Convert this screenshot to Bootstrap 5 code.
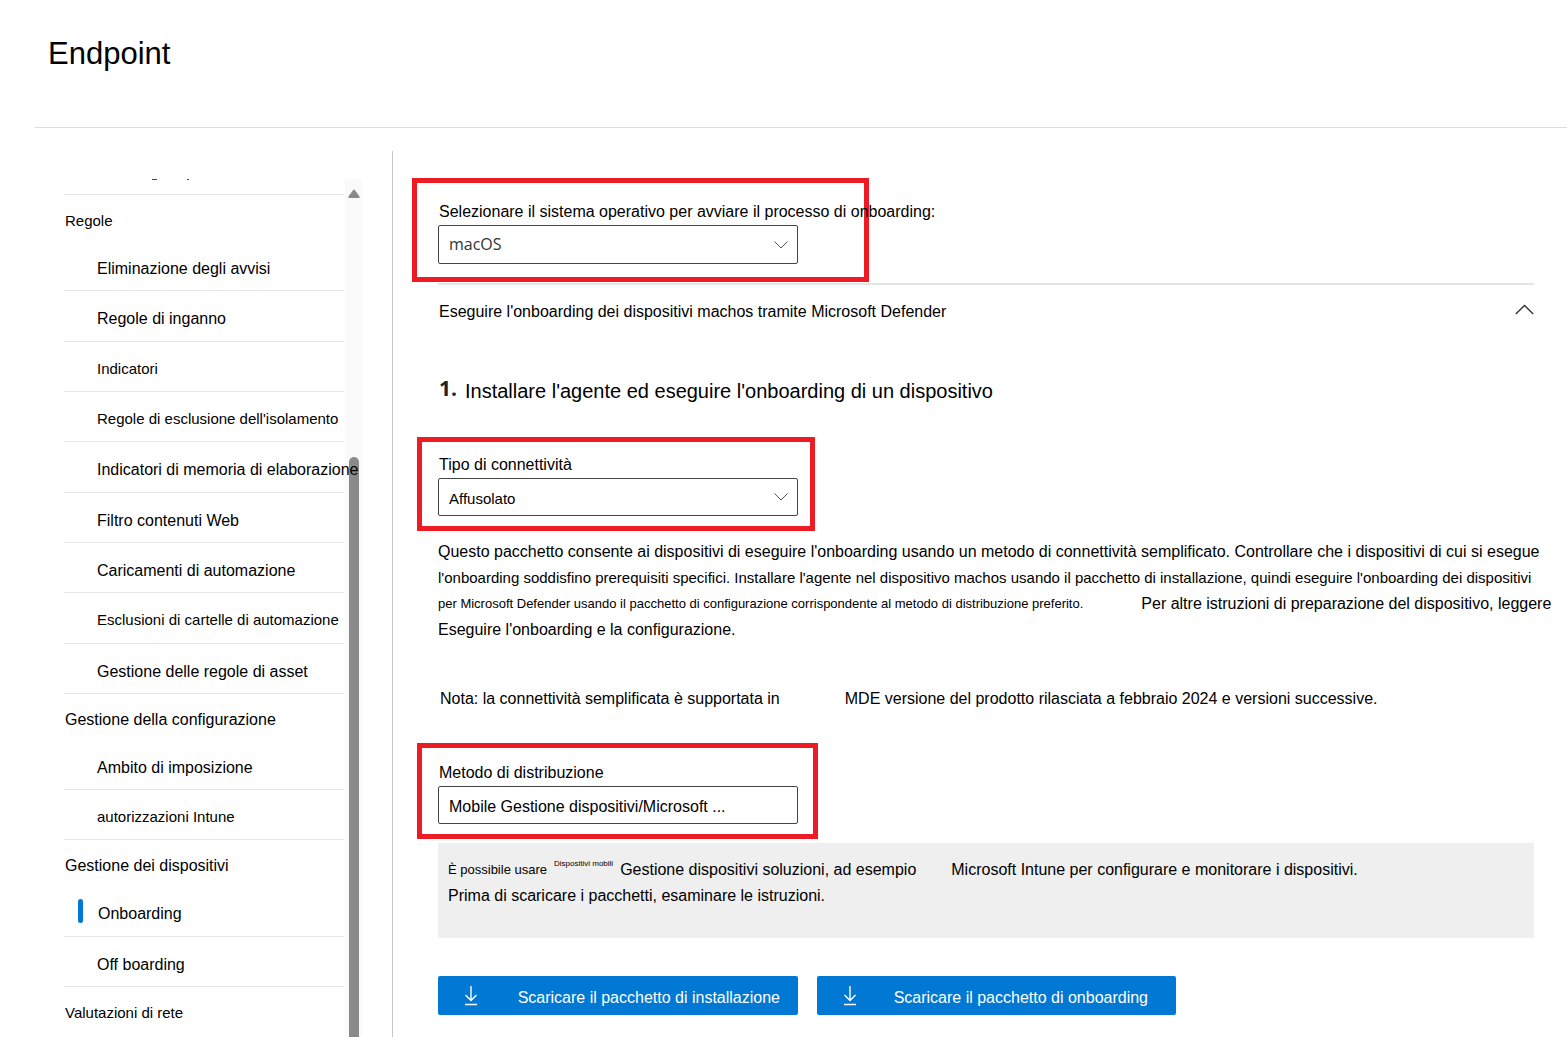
<!DOCTYPE html>
<html lang="it">
<head>
<meta charset="utf-8">
<meta name="viewport" content="width=device-width, initial-scale=1">
<title>Endpoint</title>
<link href="https://cdn.jsdelivr.net/npm/bootstrap@5.3.0/dist/css/bootstrap.min.css" rel="stylesheet">
<style>
  body { font-family: "Liberation Sans", Arial, sans-serif; font-size: 16px; line-height: 24px; color: #000; background: #fff; }
  a { color: inherit; text-decoration: none; }
  .shell { min-height: 100vh; }
  .page-head { margin-left: 35px; padding: 35px 13px 54px; border-bottom: 1px solid #dcdcdc; }
  .page-head h1 { font-size: 31px; line-height: 38px; font-weight: 400; }

  .side { width: 393px; flex: none; margin-top: 23px; padding: 28px 30px 0 64px; border-right: 1px solid #c8c8c8; }
  .side-nav { width: 281px; z-index: 1; }
  .side-nav ul { width: 280px; }
  .cut-row { height: 16px; border-bottom: 1px solid #e6e6e6; }
  .cut-row svg { display: block; margin-left: 87px; }
  .nav-group { height: 46px; padding: 6px 0 0 1px; }
  .nav-leaf { height: 50px; padding: 6px 0 0 33px; border-bottom: 1px solid #e6e6e6; white-space: nowrap; }
  .nav-leaf.txt-15 { padding-top: 4px; }
  .nav-leaf.tall { height: 51px; }
  .txt-15 { font-size: 15px; }
  .txt-13 { font-size: 13px; }
  .txt-8 { font-size: 8px; line-height: 14px; }
  .nav-leaf.current { padding-left: 14px; }
  .current-bar { width: 5px; height: 24px; margin: -7px 15px 0 0; border-radius: 3px; background: #0078d4; }

  .bar-track { width: 17px; background: #fafafa; padding-top: 10px; }
  .bar-thumb { width: 10px; margin-top: 258px; border-radius: 5px 5px 0 0; background: #8a8a8a; }

  .work { padding: 50px 0 20px 45px; min-width: 0; }
  .inset-end { margin-right: 33px; }
  .hilite { border: 5px solid #ed1c24; padding: 11px 12px 10px 16px; margin: 33px 0 0 -21px; width: 398px; }
  .hilite-os { padding: 17px 66px 13px 21px; margin: 0 0 0 -26px; width: 457px; }
  .hilite-method { padding-top: 13px; padding-right: 15px; width: 401px; }
  .hilite label { display: block; margin: 0 0 1px 1px; white-space: nowrap; }
  .pick.form-select { width: 360px; height: 38px; padding: 4px 30px 0 10px; border: 1px solid #444; border-radius: 2px; color: #000; line-height: 24px;
    background-position: right 9px center; background-size: 14px 8px;
    background-image: url("data:image/svg+xml,%3Csvg xmlns='http://www.w3.org/2000/svg' viewBox='0 0 14 8'%3E%3Cpath d='M.5.5 7 7 13.5.5' fill='none' stroke='%23555'/%3E%3C/svg%3E"); }
  .pick-os.form-select { height: 39px; padding-top: 0; padding-bottom: 2px; font-family: "Open Sans", "Noto Sans", sans-serif; font-size: 16px; color: #333; }
  .pick-plain.form-select { background-image: none; }

  .fold { margin-top: 1px; border-top: 2px solid #e4e4e4; padding-top: 15px; }
  .fold button { background: none; border: 0; padding: 0 0 0 1px; color: inherit; }
  .fold svg { margin-top: -4px; }
  .step { margin-top: 54px; gap: 8px; padding-left: 1px; }
  .step-no { font-family: "Open Sans", "Noto Sans", sans-serif; font-weight: 700; font-size: 21px; line-height: 20px; color: #222; }
  .step h2 { font-size: 20px; line-height: 26px; font-weight: 400; margin: 0; }
  .copy { line-height: 26px; margin-top: 8px; }
  .copy > div { white-space: nowrap; }
  .gap-link { gap: 58px; }
  .remark { margin-top: 44px; padding-left: 2px; gap: 65px; line-height: 24px; }
  .remark + .hilite { margin-top: 32px; }
  .tip { margin-top: 4px; padding: 14px 10px 29px; background: #efefef; line-height: 26px; }
  .tip-line { gap: 7px; }
  .tip-product { margin-left: 28px; }
  .actions { margin-top: 38px; gap: 19px; }
  .load.btn { --bs-btn-color: #fff; --bs-btn-bg: #0078d4; --bs-btn-hover-bg: #106ebe; --bs-btn-hover-color: #fff; width: 360px; height: 39px; border: 0; border-radius: 2px; padding: 4px 18px 0 26px; font-size: 16px; }
  .load.btn svg { margin-top: -4px; }
  .load-pkg.btn { width: 359px; padding-right: 28px; }
</style>
</head>
<body>
<div class="shell d-flex flex-column">
  <header class="page-head"><h1 class="m-0">Endpoint</h1></header>
  <div class="d-flex flex-grow-1">
    <aside class="side d-flex">
      <nav class="side-nav position-relative" aria-label="Impostazioni">
        <ul class="list-unstyled m-0">
          <li class="cut-row"><svg width="40" height="1" aria-hidden="true"><path d="M1 .5h5M36 .5h2" stroke="#444"/></svg></li>
          <li class="nav-group txt-15 d-flex align-items-center">Regole</li>
          <li class="nav-leaf d-flex align-items-center"><a href="#">Eliminazione degli avvisi</a></li>
          <li class="nav-leaf tall d-flex align-items-center"><a href="#">Regole di inganno</a></li>
          <li class="nav-leaf txt-15 d-flex align-items-center"><a href="#">Indicatori</a></li>
          <li class="nav-leaf txt-15 d-flex align-items-center"><a href="#">Regole di esclusione dell'isolamento</a></li>
          <li class="nav-leaf tall d-flex align-items-center"><a href="#">Indicatori di memoria di elaborazione</a></li>
          <li class="nav-leaf d-flex align-items-center"><a href="#">Filtro contenuti Web</a></li>
          <li class="nav-leaf d-flex align-items-center"><a href="#">Caricamenti di automazione</a></li>
          <li class="nav-leaf tall txt-15 d-flex align-items-center"><a href="#">Esclusioni di cartelle di automazione</a></li>
          <li class="nav-leaf d-flex align-items-center"><a href="#">Gestione delle regole di asset</a></li>
          <li class="nav-group d-flex align-items-center">Gestione della configurazione</li>
          <li class="nav-leaf d-flex align-items-center"><a href="#">Ambito di imposizione</a></li>
          <li class="nav-leaf txt-15 d-flex align-items-center"><a href="#">autorizzazioni Intune</a></li>
          <li class="nav-group d-flex align-items-center">Gestione dei dispositivi</li>
          <li class="nav-leaf tall current d-flex align-items-center"><span class="current-bar"></span><a href="#" aria-current="page">Onboarding</a></li>
          <li class="nav-leaf d-flex align-items-center"><a href="#">Off boarding</a></li>
          <li class="nav-group txt-15 d-flex align-items-center">Valutazioni di rete</li>
        </ul>
      </nav>
      <div class="bar-track d-flex flex-column align-items-center" aria-hidden="true">
        <svg width="12" height="10" viewBox="0 0 12 10"><path d="M6 1.5 10.700 8H1.300z" fill="#8a8a8a" stroke="#8a8a8a" stroke-width="2" stroke-linejoin="round"/></svg>
        <div class="bar-thumb flex-grow-1"></div>
      </div>
    </aside>

    <main class="work flex-grow-1">
      <div class="hilite hilite-os">
        <label for="os">Selezionare il sistema operativo per avviare il processo di onboarding:</label>
        <select id="os" class="form-select pick pick-os"><option>macOS</option></select>
      </div>
      <section class="fold inset-end">
        <button type="button" class="d-flex w-100 justify-content-between align-items-center text-start" aria-expanded="true">
          <span>Eseguire l'onboarding dei dispositivi machos tramite Microsoft Defender</span>
          <svg width="19" height="12" viewBox="0 0 19 12" aria-hidden="true"><path d="M.8 10 9.500 1.400 18.200 10" fill="none" stroke="#333" stroke-width="1.4"/></svg>
        </button>
      </section>
      <div class="step d-flex align-items-start">
        <span class="step-no">1.</span>
        <h2>Installare l'agente ed eseguire l'onboarding di un dispositivo</h2>
      </div>
      <div class="hilite">
        <label for="conn">Tipo di connettività</label>
        <select id="conn" class="form-select pick txt-15"><option>Affusolato</option></select>
      </div>
      <div class="copy">
        <div>Questo pacchetto consente ai dispositivi di eseguire l'onboarding usando un metodo di connettività semplificato. Controllare che i dispositivi di cui si esegue</div>
        <div class="txt-15">l'onboarding soddisfino prerequisiti specifici. Installare l'agente nel dispositivo machos usando il pacchetto di installazione, quindi eseguire l'onboarding dei dispositivi</div>
        <div class="d-flex gap-link"><span class="txt-13">per Microsoft Defender usando il pacchetto di configurazione corrispondente al metodo di distribuzione preferito.</span><span>Per altre istruzioni di preparazione del dispositivo, leggere</span></div>
        <div>Eseguire l'onboarding e la configurazione.</div>
      </div>
      <div class="remark d-flex"><span>Nota: la connettività semplificata è supportata in</span><span>MDE versione del prodotto rilasciata a febbraio 2024 e versioni successive.</span></div>
      <div class="hilite hilite-method">
        <label for="method">Metodo di distribuzione</label>
        <select id="method" class="form-select pick pick-plain"><option>Mobile Gestione dispositivi/Microsoft ...</option></select>
      </div>
      <div class="tip inset-end">
        <div class="tip-line d-flex"><span class="txt-13">È possibile usare</span><span class="txt-8">Dispositivi mobili</span><span>Gestione dispositivi soluzioni, ad esempio</span><span class="tip-product">Microsoft Intune per configurare e monitorare i dispositivi.</span></div>
        <div>Prima di scaricare i pacchetti, esaminare le istruzioni.</div>
      </div>
      <div class="actions d-flex">
        <button type="button" class="btn load d-flex align-items-center justify-content-between"><svg width="14" height="20" viewBox="0 0 14 20" fill="none" stroke="#fff" stroke-width="1.4" aria-hidden="true"><path d="M7 0v14.500M1.500 9 7 14.500 12.500 9M1 18.500h12"/></svg><span>Scaricare il pacchetto di installazione</span></button>
        <button type="button" class="btn load load-pkg d-flex align-items-center justify-content-between"><svg width="14" height="20" viewBox="0 0 14 20" fill="none" stroke="#fff" stroke-width="1.4" aria-hidden="true"><path d="M7 0v14.500M1.500 9 7 14.500 12.500 9M1 18.500h12"/></svg><span>Scaricare il pacchetto di onboarding</span></button>
      </div>
    </main>
  </div>
</div>
<script src="https://cdn.jsdelivr.net/npm/bootstrap@5.3.0/dist/js/bootstrap.bundle.min.js"></script>
</body>
</html>
